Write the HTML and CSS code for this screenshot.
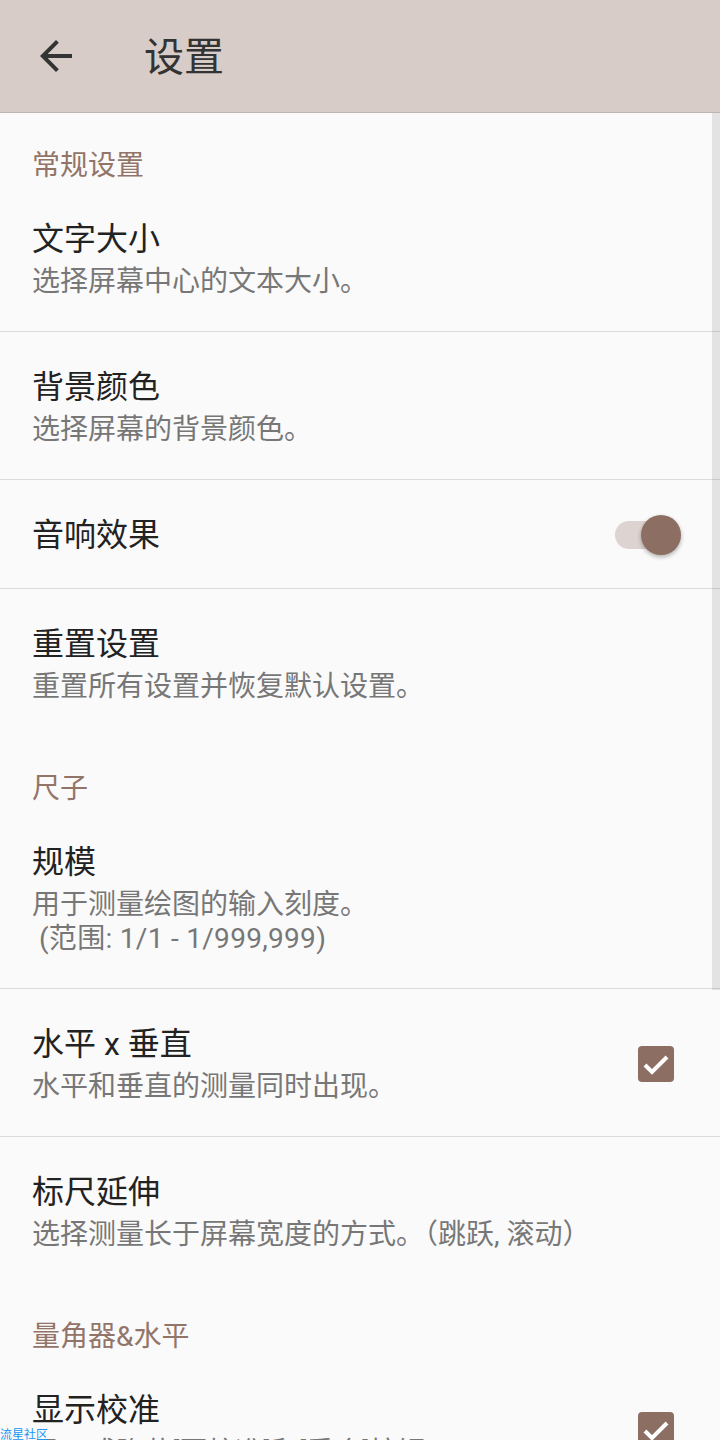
FILE: index.html
```html
<!DOCTYPE html>
<html lang="zh-CN">
<head>
<meta charset="UTF-8">
<meta name="viewport" content="width=device-width, initial-scale=1.0">
<title>设置</title>
<link rel="stylesheet" href="styles.css">
</head>
<body>

    <div id="toolbar">
        <div class="back-btn">
            <svg width="48" height="48" viewBox="0 0 24 24"><path d="M20 11H7.83l5.59-5.59L12 4l-8 8 8 8 1.41-1.41L7.83 13H20v-2z" fill="#333"/></svg>
        </div>
        <div class="toolbar-title">设置</div>
    </div>

    <div id="settings">
        <div class="category">常规设置</div>
        <div class="pref divided">
            <div class="pref-text">
                <div class="pref-title">文字大小</div>
                <div class="pref-summary">选择屏幕中心的文本大小。</div>
            </div>
        </div>
        <div class="pref divided">
            <div class="pref-text">
                <div class="pref-title">背景颜色</div>
                <div class="pref-summary">选择屏幕的背景颜色。</div>
            </div>
        </div>
        <div class="pref divided">
            <div class="pref-text">
                <div class="pref-title">音响效果</div>
            </div>
            <div class="switch">
                <div class="switch-track"></div>
                <div class="switch-thumb"></div>
            </div>
        </div>
        <div class="pref">
            <div class="pref-text">
                <div class="pref-title">重置设置</div>
                <div class="pref-summary">重置所有设置并恢复默认设置。</div>
            </div>
        </div>

        <div class="category">尺子</div>
        <div class="pref divided">
            <div class="pref-text">
                <div class="pref-title">规模</div>
                <div class="pref-summary">用于测量绘图的输入刻度。<br>&nbsp;<span class="latin">(范围: 1/1 - 1/999,999)</span></div>
            </div>
        </div>
        <div class="pref divided">
            <div class="pref-text">
                <div class="pref-title">水平 x 垂直</div>
                <div class="pref-summary">水平和垂直的测量同时出现。</div>
            </div>
            <div class="checkbox">
                <svg width="36" height="36" viewBox="0 0 36 36"><path d="M7 19l7 7 15-15" fill="none" stroke="#fff" stroke-width="4"/></svg>
            </div>
        </div>
        <div class="pref">
            <div class="pref-text">
                <div class="pref-title">标尺延伸</div>
                <div class="pref-summary">选择测量长于屏幕宽度的方式。（跳跃, 滚动）</div>
            </div>
        </div>

        <div class="category">量角器&amp;水平</div>
        <div class="pref divided">
            <div class="pref-text">
                <div class="pref-title">显示校准</div>
                <div class="pref-summary">显示或隐藏[再校准]和[重合]按钮。</div>
            </div>
            <div class="checkbox">
                <svg width="36" height="36" viewBox="0 0 36 36"><path d="M7 19l7 7 15-15" fill="none" stroke="#fff" stroke-width="4"/></svg>
            </div>
        </div>
    </div>

    <div id="scrollbar"></div>
    <div id="watermark">流星社区</div>

</body>
</html>
```

FILE: styles.css
```css
  body {
      margin: 0;
      padding: 0;
      height: 1440px;
      overflow: hidden;
      background: #fafafa;
      font-family: Roboto, "Noto Sans CJK SC", sans-serif;
      position: relative;
  }

  #toolbar {
      height: 112px;
      background: #d7ccc8;
      border-bottom: 1px solid #bdb5b2;
      display: flex;
      align-items: center;
  }

  .back-btn {
      width: 48px;
      height: 48px;
      margin-left: 32px;
  }

  .back-btn svg {
      display: block;
  }

  .toolbar-title {
      margin-left: 64px;
      padding-top: 4px;
      font-size: 40px;
      color: #333;
      line-height: 48px;
  }

  .category {
      padding: 35px 32px 0;
      font-size: 28px;
      line-height: 36px;
      color: #937468;
  }

  .pref {
      display: flex;
      align-items: center;
      padding: 34px 0 32px 32px;
  }

  .divided {
      border-bottom: 1px solid #dcdcdc;
  }

  .pref-text {
      flex: 1;
  }

  .pref-title {
      font-size: 32px;
      line-height: 42px;
      color: #222;
  }

  .pref-summary {
      margin-top: 5px;
      font-size: 28px;
      line-height: 34px;
      color: #777;
  }

  .latin {
      letter-spacing: 0.3px;
  }

  .switch {
      position: relative;
      width: 66px;
      height: 40px;
      margin-right: 39px;
  }

  .switch-track {
      position: absolute;
      left: 0;
      top: 6px;
      width: 56px;
      height: 28px;
      border-radius: 14px;
      background: #ddd4d1;
  }

  .switch-thumb {
      position: absolute;
      right: 0;
      top: 0;
      width: 40px;
      height: 40px;
      border-radius: 50%;
      background: #8d6e63;
      box-shadow: 0 2px 4px rgba(0, 0, 0, 0.3);
  }

  .checkbox {
      width: 36px;
      height: 36px;
      margin-right: 46px;
      border-radius: 4px;
      background: #8d6e63;
  }

  .checkbox svg {
      display: block;
  }

  #scrollbar {
      position: absolute;
      right: 0;
      top: 113px;
      width: 8px;
      height: 877px;
      background: rgba(0, 0, 0, 0.09);
  }

  #watermark {
      position: absolute;
      left: 0;
      bottom: -2px;
      font-size: 12px;
      line-height: 14px;
      color: #2196f3;
  }
```
